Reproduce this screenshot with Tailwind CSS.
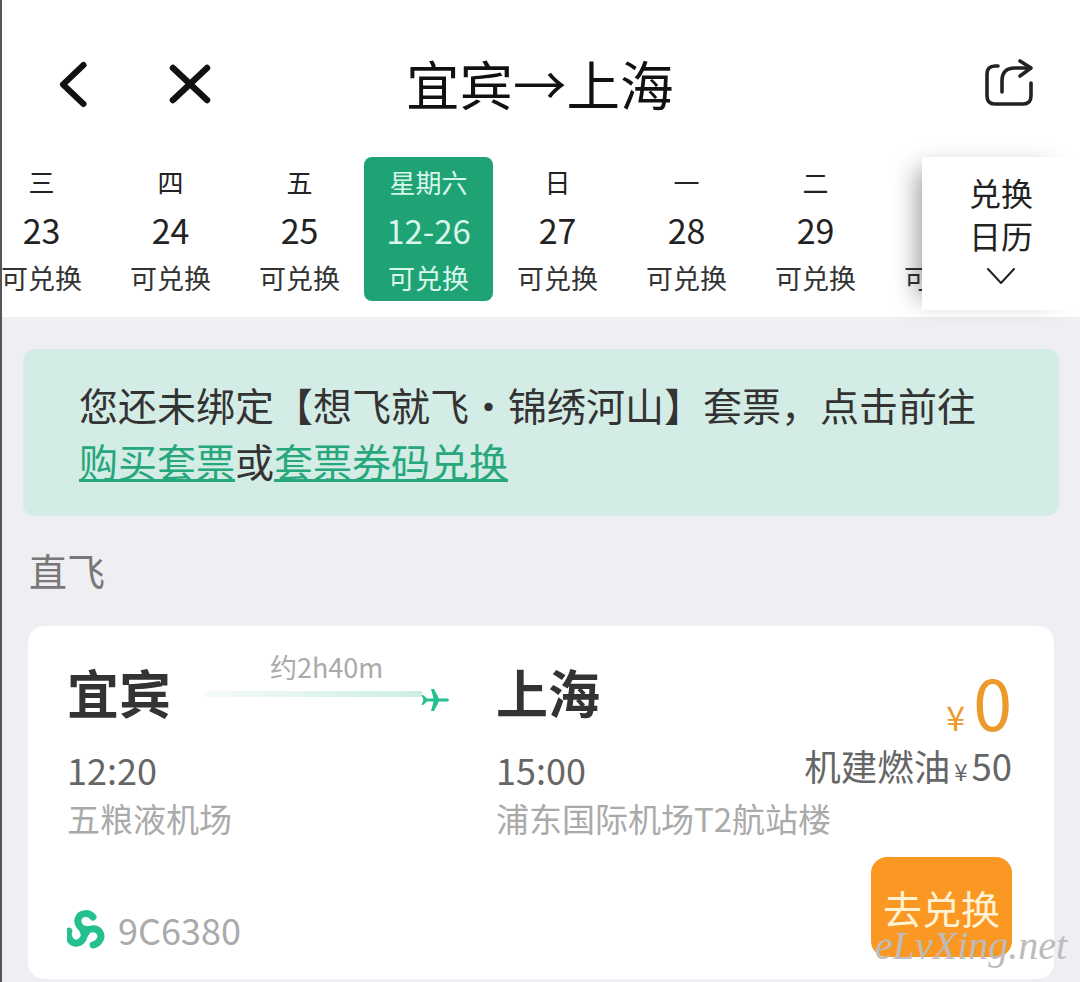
<!DOCTYPE html>
<html lang="zh-CN">
<head>
    <meta charset="UTF-8">
    <meta name="viewport" content="width=device-width, initial-scale=1.0">
    <title>宜宾→上海</title>
    <script src="https://cdn.jsdelivr.net/npm/@tailwindcss/browser@4"></script>
</head>
<body class="bg-[#eeeef3] font-['Noto_Sans_CJK_SC','Noto_Sans',sans-serif] overflow-hidden">
<div class="relative w-[1080px] h-[982px] overflow-hidden border-l-2 border-[#55555a]">

    <!-- 顶部导航 -->
    <header class="bg-white h-[157px] flex items-start pl-[56px] pr-[46px] pt-[56px] -ml-[2px]">
        <svg class="w-[36px] h-[52px] mt-[2px]" viewBox="0 0 36 52" fill="none" stroke="#111" stroke-width="6" stroke-linecap="round" stroke-linejoin="round"><path d="M27.500 7 L7 26.500 L27.500 46"/></svg>
        <svg class="w-[48px] h-[48px] ml-[72px] mt-[4px]" viewBox="0 0 48 48" fill="none" stroke="#111" stroke-width="6.500" stroke-linecap="round"><path d="M9 8 L43 40 M43 8 L9 40"/></svg>
        <h1 class="text-[53.500px] leading-[60px] text-[#111] ml-[194px] -mt-[3px] w-[270px] whitespace-nowrap">宜宾→上海</h1>
        <svg class="w-[50px] h-[50px] ml-auto mt-[2px]" viewBox="0 0 50 50" fill="none" stroke="#222" stroke-width="3.6" stroke-linecap="round" stroke-linejoin="round"><path d="M14 8 H11 Q3 8 3 16 V38 Q3 46 11 46 H39 Q47 46 47 38 V25"/><path d="M18 34 V23 Q18 10 31 10 H46"/><path d="M36 3 L47 10 L36 18"/></svg>
    </header>

    <!-- 日期条 -->
    <div class="relative bg-white h-[160px] -ml-[2px]">
        <div class="flex -ml-[23px] overflow-hidden text-[#222] text-center">
            <div class="w-[129px] shrink-0 h-[144px] flex flex-col items-center pt-[6px]"><span class="text-[26px] leading-[38px]">三</span><span class="text-[34px] leading-[48px] mt-[5px]">23</span><span class="text-[27px] leading-[46px] mt-[1px] text-[#333]">可兑换</span></div>
            <div class="w-[129px] shrink-0 h-[144px] flex flex-col items-center pt-[6px]"><span class="text-[26px] leading-[38px]">四</span><span class="text-[34px] leading-[48px] mt-[5px]">24</span><span class="text-[27px] leading-[46px] mt-[1px] text-[#333]">可兑换</span></div>
            <div class="w-[129px] shrink-0 h-[144px] flex flex-col items-center pt-[6px]"><span class="text-[26px] leading-[38px]">五</span><span class="text-[34px] leading-[48px] mt-[5px]">25</span><span class="text-[27px] leading-[46px] mt-[1px] text-[#333]">可兑换</span></div>
            <div class="w-[129px] shrink-0 h-[144px] flex flex-col items-center pt-[6px] bg-[#1fa274] rounded-[8px] text-[#d6f7ea]"><span class="text-[26px] leading-[38px]">星期六</span><span class="text-[33px] leading-[48px] mt-[5px]">12-26</span><span class="text-[27px] leading-[46px] mt-[1px]">可兑换</span></div>
            <div class="w-[129px] shrink-0 h-[144px] flex flex-col items-center pt-[6px]"><span class="text-[26px] leading-[38px]">日</span><span class="text-[34px] leading-[48px] mt-[5px]">27</span><span class="text-[27px] leading-[46px] mt-[1px] text-[#333]">可兑换</span></div>
            <div class="w-[129px] shrink-0 h-[144px] flex flex-col items-center pt-[6px]"><span class="text-[26px] leading-[38px]">一</span><span class="text-[34px] leading-[48px] mt-[5px]">28</span><span class="text-[27px] leading-[46px] mt-[1px] text-[#333]">可兑换</span></div>
            <div class="w-[129px] shrink-0 h-[144px] flex flex-col items-center pt-[6px]"><span class="text-[26px] leading-[38px]">二</span><span class="text-[34px] leading-[48px] mt-[5px]">29</span><span class="text-[27px] leading-[46px] mt-[1px] text-[#333]">可兑换</span></div>
            <div class="w-[129px] shrink-0 h-[144px] flex flex-col items-center pt-[6px]"><span class="text-[26px] leading-[38px]">三</span><span class="text-[34px] leading-[48px] mt-[5px]">30</span><span class="text-[27px] leading-[46px] mt-[1px] text-[#333]">可兑换</span></div>
        </div>
        <div class="absolute left-[922px] top-0 w-[158px] h-[153px] bg-white shadow-[-16px_0_24px_-12px_rgba(0,0,0,0.4)] flex flex-col items-center pt-[14px] text-[#222] text-[32px] leading-[43px]">
            <span>兑换</span>
            <span>日历</span>
            <svg class="w-[30px] h-[20px] mt-[10px]" viewBox="0 0 30 20" fill="none" stroke="#222" stroke-width="2" stroke-linecap="round" stroke-linejoin="round"><path d="M2 2 L15 16 L28 2"/></svg>
        </div>
    </div>

    <!-- 提示 -->
    <div class="ml-[21px] mt-[32px] w-[1036px] h-[167px] bg-[#d3ece5] rounded-[12px] pl-[56px] pt-[27px] text-[39px] leading-[56px] text-[#333]">
        <p class="whitespace-nowrap">您还未绑定【想飞就飞・锦绣河山】套票，点击前往</p>
        <p class="whitespace-nowrap"><span class="text-[#27a77c] underline">购买套票</span>或<span class="text-[#27a77c] underline">套票券码兑换</span></p>
    </div>

    <p class="ml-[27px] mt-[28px] text-[38px] leading-[52px] text-[#777]">直飞</p>

    <!-- 航班卡片 -->
    <div class="relative ml-[26px] mt-[30px] w-[1026px] h-[353px] bg-white rounded-[16px]">
        <div class="flex pl-[39px] pt-[36px]">
            <div class="w-[137px]">
                <p class="text-[52px] leading-[60px] font-bold text-[#333]">宜宾</p>
                <p class="text-[36px] leading-[50px] mt-[22px] text-[#666]">12:20</p>
                <p class="text-[33px] leading-[48px] text-[#aaa] whitespace-nowrap">五粮液机场</p>
            </div>
            <div class="w-[293px] relative">
                <p class="absolute left-[66px] -top-[14px] text-[27px] leading-[38px] text-[#aaa] whitespace-nowrap">约2h40m</p>
                <div class="absolute left-0 top-[29px] w-[218px] h-[6px] bg-gradient-to-r from-[#f4fbf8] to-[#cdeee2]"></div>
                <svg class="absolute left-[217px] top-[26px] w-[28px] h-[24px]" viewBox="0 0 28 24" fill="#25bf90"><path d="M27 10.500 Q28.500 12 27 13.500 H18 L13 23 H10 L12.500 13.500 H6 L2 17 H0.500 L2.500 12 L0.500 7 H2 L6 10.500 H12.500 L10 1 H13 L18 10.500 Z"/></svg>
            </div>
            <div class="-ml-[1px]">
                <p class="text-[52px] leading-[60px] font-bold text-[#333]">上海</p>
                <p class="text-[36px] leading-[50px] mt-[22px] text-[#666]">15:00</p>
                <p class="text-[33px] leading-[48px] text-[#aaa] whitespace-nowrap">浦东国际机场T2航站楼</p>
            </div>
        </div>

        <div class="absolute right-[42px] top-[35px] flex flex-col items-end">
            <p class="flex items-baseline text-[#ec9a2c] h-[72px]"><span class="text-[34px] mr-[8px]">¥</span><span class="text-[70px] leading-[80px]">0</span></p>
            <p class="flex items-baseline text-[#666] text-[36.500px] leading-[50px] mt-[8px]">机建燃油<span class="text-[24px] mx-[4px]">¥</span>50</p>
        </div>

        <div class="absolute left-[39px] bottom-[25px] flex items-center">
            <svg class="w-[40px] h-[40px]" viewBox="0 0 40 40" fill="none" stroke="#25bf90" stroke-width="7" stroke-linecap="round">
                <circle cx="18" cy="22" r="3" fill="#25bf90" stroke-width="5"/>
                <path d="M18 22 C12 18 9 13 12 8 C14 4 22 3 26 8"/>
                <path transform="rotate(120 18 22)" d="M18 22 C12 18 9 13 12 8 C14 4 22 3 26 8"/>
                <path transform="rotate(240 18 22)" d="M18 22 C12 18 9 13 12 8 C14 4 22 3 26 8"/>
            </svg>
            <span class="ml-[11px] text-[36px] leading-[50px] text-[#aaa]">9C6380</span>
        </div>

        <button class="absolute left-[843px] top-[231px] w-[141px] h-[100px] bg-[#fb9823] rounded-[16px] text-[39px] leading-[100px] text-[#fff3d6] pb-[6px]">去兑换</button>
        <span class="absolute left-[847px] top-[298px] text-[40px] leading-[44px] italic text-[#bcbcbe] font-['Liberation_Serif',serif] whitespace-nowrap">eLvXing.net</span>
    </div>
</div>
</body>
</html>
